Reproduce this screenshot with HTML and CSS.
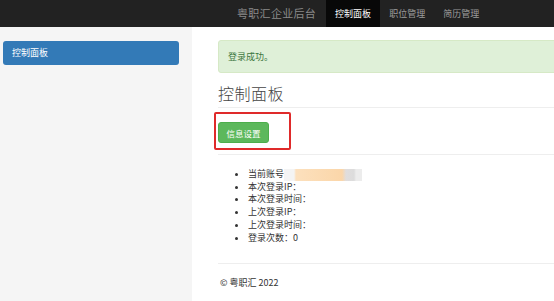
FILE: index.html
```html
<!DOCTYPE html>
<html lang="zh-CN">
<head>
    <meta charset="UTF-8">
    <meta name="viewport" content="width=device-width, initial-scale=1.0">
    <title>粤职汇企业后台</title>
    <link rel="stylesheet" href="styles.css">
</head>
<body>
    <nav class="navbar">
        <span class="brand">粤职汇企业后台</span>
        <ul class="nav">
            <li class="active">控制面板</li>
            <li>职位管理</li>
            <li>简历管理</li>
        </ul>
    </nav>
    <div class="page">
        <aside class="sidebar">
            <a class="side-item active" href="#">控制面板</a>
        </aside>
        <main class="main">
            <div class="alert">登录成功。</div>
            <h1 class="page-header">控制面板</h1>
            <div class="toolbar">
                <span class="mark">
                    <button class="btn-success">信息设置</button>
                </span>
            </div>
            <ul class="info">
                <li>当前账号<span class="masked"></span></li>
                <li>本次登录IP：</li>
                <li>本次登录时间：</li>
                <li>上次登录IP：</li>
                <li>上次登录时间：</li>
                <li>登录次数：0</li>
            </ul>
            <footer class="footer">© 粤职汇 2022</footer>
        </main>
    </div>
</body>
</html>
```

FILE: styles.css
```css
html, body {
    overflow: hidden;
}
body {
    margin: 0;
    font-family: "Noto Sans CJK SC", "Liberation Sans", sans-serif;
    font-size: 9px;
    color: #333;
    background: #fff;
}
.navbar {
    height: 27px;
    background: #222;
    display: flex;
    align-items: stretch;
    padding-left: 237px;
}
.brand {
    color: #8a8a8a;
    font-size: 11px;
    line-height: 27px;
    margin-right: 10px;
    letter-spacing: 0.3px;
}
.nav {
    list-style: none;
    margin: 0;
    padding: 0;
    display: flex;
}
.nav li {
    color: #9d9d9d;
    line-height: 27px;
    padding: 0 9px;
}
.nav li.active {
    color: #fff;
    background: #080808;
}
.page {
    display: flex;
    min-height: 274px;
}
.sidebar {
    width: 192px;
    flex: none;
    background: #f5f5f5;
    padding: 14px 13px 0 3px;
    box-sizing: border-box;
}
.side-item {
    display: block;
    height: 24px;
    line-height: 24px;
    padding-left: 9px;
    color: #fff;
    text-decoration: none;
    border-radius: 3px;
}
.side-item.active {
    background: #337ab7;
}
.main {
    flex: 1;
    padding: 13px 0 0 26px;
    margin-right: -20px;
}
.alert {
    background: #dff0d8;
    border: 1px solid #d6e9c6;
    border-radius: 3px;
    color: #3c763d;
    padding: 9px 9px;
    line-height: 13px;
}
.page-header {
    margin: 10px 0 0;
    font-size: 16px;
    line-height: 20px;
    font-weight: 300;
    color: #444;
    padding-bottom: 4px;
    border-bottom: 1px solid #eee;
    letter-spacing: 0.5px;
}
.toolbar {
    padding: 14px 0 11px;
    border-bottom: 1px solid #eee;
}
.mark {
    position: relative;
    display: inline-block;
    vertical-align: top;
}
.mark::after {
    content: "";
    position: absolute;
    left: -4px;
    top: -10px;
    width: 73px;
    height: 34px;
    border: 2px solid #df2a2a;
    border-radius: 2px;
}
.btn-success {
    display: block;
    height: 21px;
    width: 51px;
    padding: 0;
    border: 1px solid #4cae4c;
    border-radius: 3px;
    background: #5cb85c;
    color: #fff;
    font-family: inherit;
    font-size: 8.5px;
}
.info {
    margin: 13px 0 0;
    padding-left: 30px;
    line-height: 12.7px;
}
.masked {
    display: inline-block;
    vertical-align: middle;
    width: 78px;
    height: 12px;
    margin-left: 0;
    background: linear-gradient(to right, #f4f4f4 0, #f4f4f4 10px, #fce0bd 12px, #fbd6a9 58px, #e0dddd 62px, #dcdcdc 70px, #ececec 72px, #ececec 78px);
}
.footer {
    margin-top: 19px;
    border-top: 1px solid #eee;
    padding-top: 12px;
    line-height: 13px;
    padding-left: 2px;
}
```
